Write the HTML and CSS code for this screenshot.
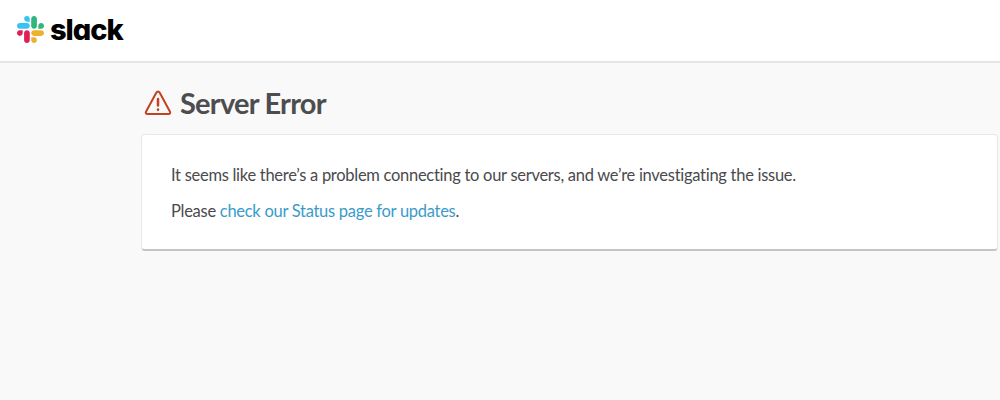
FILE: index.html
```html
<!DOCTYPE html>
<html lang="en">
<head>
    <meta charset="UTF-8">
    <meta name="viewport" content="width=device-width, initial-scale=1.0">
    <title>Server Error | Slack</title>
    <link rel="stylesheet" href="styles.css">
</head>
<body>
    <header class="header">
        <a class="logo" href="#">
            <svg class="logo-mark" viewBox="0 0 122.8 122.8">
                <path fill="#E01E5A" d="M25.8 77.6c0 7.1-5.8 12.9-12.9 12.9S0 84.7 0 77.6s5.8-12.9 12.9-12.9h12.9v12.9zm6.5 0c0-7.1 5.8-12.9 12.9-12.9s12.9 5.8 12.9 12.9v32.3c0 7.1-5.8 12.9-12.9 12.9s-12.9-5.8-12.9-12.9V77.6z"/>
                <path fill="#36C5F0" d="M45.2 25.8c-7.1 0-12.9-5.8-12.9-12.9S38.1 0 45.2 0s12.9 5.8 12.9 12.9v12.9H45.2zm0 6.5c7.1 0 12.9 5.8 12.9 12.9s-5.8 12.9-12.9 12.9H12.9C5.8 58.1 0 52.3 0 45.2s5.8-12.9 12.9-12.9h32.3z"/>
                <path fill="#2EB67D" d="M97 45.2c0-7.1 5.8-12.9 12.9-12.9s12.9 5.8 12.9 12.9-5.8 12.9-12.9 12.9H97V45.2zm-6.5 0c0 7.1-5.8 12.9-12.9 12.9s-12.9-5.8-12.9-12.9V12.9C64.7 5.8 70.5 0 77.6 0s12.9 5.8 12.9 12.9v32.3z"/>
                <path fill="#ECB22E" d="M77.6 97c7.1 0 12.9 5.8 12.9 12.9s-5.8 12.9-12.9 12.9-12.9-5.8-12.9-12.9V97h12.9zm0-6.5c-7.1 0-12.9-5.8-12.9-12.9s5.8-12.9 12.9-12.9h32.3c7.1 0 12.9 5.8 12.9 12.9s-5.8 12.9-12.9 12.9H77.6z"/>
            </svg>
            <span class="logo-text">slack</span>
        </a>
    </header>

    <main class="page">
        <h1 class="title">
            <svg class="warning-icon" viewBox="0 0 28 26" fill="none" stroke="#c2411f" stroke-width="2" stroke-linecap="round" stroke-linejoin="round">
                <path d="M12.4 2.6 2.1 21.4c-.8 1.4-.1 2.7 1.5 2.7h20.8c1.6 0 2.3-1.3 1.5-2.7L15.6 2.6c-.8-1.4-2.4-1.4-3.2 0z"/>
                <path stroke-width="2.5" d="M14 9v6.4M14 19.6v.1"/>
            </svg>
            <span>Server Error</span>
        </h1>
        <div class="card">
            <p>It seems like there’s a problem connecting to our servers, and we’re investigating the issue.</p>
            <p>Please <a href="#">check our Status page for updates</a>.</p>
        </div>
    </main>
</body>
</html>
```
FILE: styles.css
```css
body {
    margin: 0;
    background-color: #f9f9f9;
    color: #4a4a4d;
    font-family: Lato, sans-serif;
    font-size: 16.5px;
    font-variant-ligatures: none;
    line-height: 24px;
    letter-spacing: -0.28px;
}
.header {
    display: flex;
    align-items: center;
    box-sizing: border-box;
    height: 63px;
    padding: 0 17px 2px;
    background-color: #fff;
    border-bottom: 2px solid #e5e5e5;
}
.logo {
    display: flex;
    align-items: center;
    gap: 6px;
    color: #000;
    text-decoration: none;
}
.logo-mark {
    width: 27px;
    height: 27px;
}
.logo-text {
    font-family: Inter, sans-serif;
    font-size: 29px;
    font-weight: 800;
    line-height: 30px;
    letter-spacing: -1px;
    font-feature-settings: "cv11";
}
.page {
    width: 857px;
    margin-left: 141px;
    padding-top: 23px;
}
.title {
    display: flex;
    align-items: center;
    gap: 8px;
    margin: 0 0 14px 3px;
    color: #4d4d50;
    font-size: 29px;
    font-weight: 700;
    line-height: 34px;
    letter-spacing: -0.75px;
}
.warning-icon {
    width: 28px;
    height: 26px;
}
.card {
    box-sizing: border-box;
    height: 117px;
    padding: 28px 29px;
    background-color: #fff;
    border: 1px solid #e8e8e8;
    border-bottom: 2px solid #c4c4c4;
    border-radius: 4px;
}
.card p {
    margin: 0 0 12px;
}
.card a {
    color: #3a9bc9;
    text-decoration: none;
}
```
